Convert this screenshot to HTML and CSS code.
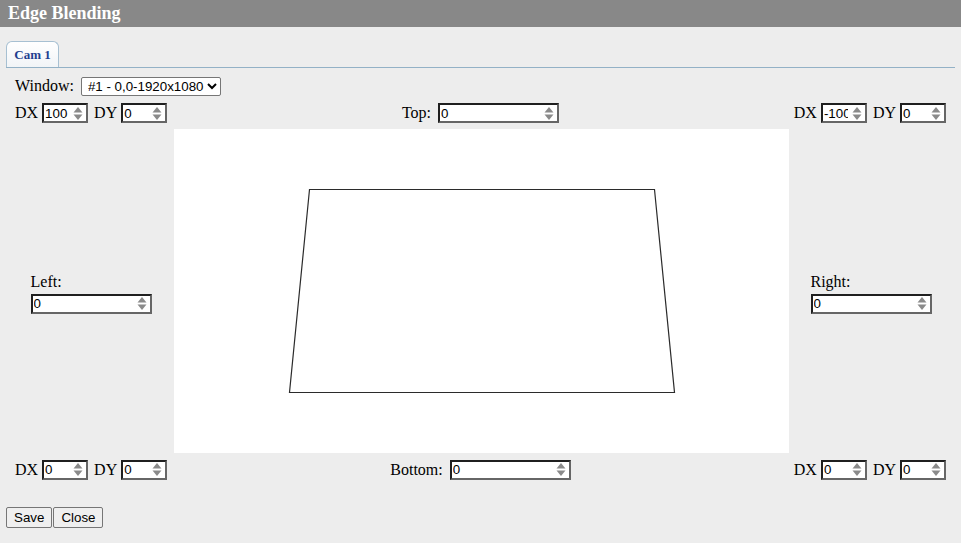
FILE: index.html
```html
<!DOCTYPE html>
<html lang="en">
<head>
    <meta charset="UTF-8">
    <title>Edge Blending</title>
    <link rel="stylesheet" href="styles.css">
</head>
<body>
    <div class="titlebar">Edge Blending</div>

    <div class="tabs">
        <div class="tab">Cam 1</div>
    </div>

    <div class="window-row">
        <span class="label">Window:</span>
        <select id="window">
            <option>#1 - 0,0-1920x1080</option>
        </select>
    </div>

    <div class="edge-row">
        <div class="corner">
            <span class="label">DX</span>
            <span class="num small"><input type="number" id="tlx" value="100"><svg class="spin" viewBox="0 0 12 15"><polygon points="1.5,6.5 6,1 10.5,6.5"/><polygon points="1.5,8.5 10.5,8.5 6,14"/></svg></span>
            <span class="label gap">DY</span>
            <span class="num small"><input type="number" id="tly" value="0"><svg class="spin" viewBox="0 0 12 15"><polygon points="1.5,6.5 6,1 10.5,6.5"/><polygon points="1.5,8.5 10.5,8.5 6,14"/></svg></span>
        </div>
        <div class="edge">
            <span class="label">Top:</span>
            <span class="num wide"><input type="number" id="top" value="0"><svg class="spin" viewBox="0 0 12 15"><polygon points="1.5,6.5 6,1 10.5,6.5"/><polygon points="1.5,8.5 10.5,8.5 6,14"/></svg></span>
        </div>
        <div class="corner right">
            <span class="label">DX</span>
            <span class="num small"><input type="number" id="trx" value="-100"><svg class="spin" viewBox="0 0 12 15"><polygon points="1.5,6.5 6,1 10.5,6.5"/><polygon points="1.5,8.5 10.5,8.5 6,14"/></svg></span>
            <span class="label gap">DY</span>
            <span class="num small"><input type="number" id="try" value="0"><svg class="spin" viewBox="0 0 12 15"><polygon points="1.5,6.5 6,1 10.5,6.5"/><polygon points="1.5,8.5 10.5,8.5 6,14"/></svg></span>
        </div>
    </div>

    <div class="stage">
        <div class="side">
            <div class="side-label">Left:</div>
            <span class="num wide"><input type="number" id="left" value="0"><svg class="spin" viewBox="0 0 12 15"><polygon points="1.5,6.5 6,1 10.5,6.5"/><polygon points="1.5,8.5 10.5,8.5 6,14"/></svg></span>
        </div>
        <div class="canvas">
            <svg width="615" height="324" viewBox="0 0 615 324">
                <polygon points="135.5,60.5 480.5,60.5 500.5,263.5 115.5,263.5" fill="none" stroke="#2b2b2b" stroke-width="1.2"/>
            </svg>
        </div>
        <div class="side">
            <div class="side-label">Right:</div>
            <span class="num wide"><input type="number" id="right" value="0"><svg class="spin" viewBox="0 0 12 15"><polygon points="1.5,6.5 6,1 10.5,6.5"/><polygon points="1.5,8.5 10.5,8.5 6,14"/></svg></span>
        </div>
    </div>

    <div class="edge-row bottom">
        <div class="corner">
            <span class="label">DX</span>
            <span class="num small"><input type="number" id="blx" value="0"><svg class="spin" viewBox="0 0 12 15"><polygon points="1.5,6.5 6,1 10.5,6.5"/><polygon points="1.5,8.5 10.5,8.5 6,14"/></svg></span>
            <span class="label gap">DY</span>
            <span class="num small"><input type="number" id="bly" value="0"><svg class="spin" viewBox="0 0 12 15"><polygon points="1.5,6.5 6,1 10.5,6.5"/><polygon points="1.5,8.5 10.5,8.5 6,14"/></svg></span>
        </div>
        <div class="edge">
            <span class="label">Bottom:</span>
            <span class="num wide"><input type="number" id="bottom" value="0"><svg class="spin" viewBox="0 0 12 15"><polygon points="1.5,6.5 6,1 10.5,6.5"/><polygon points="1.5,8.5 10.5,8.5 6,14"/></svg></span>
        </div>
        <div class="corner right">
            <span class="label">DX</span>
            <span class="num small"><input type="number" id="brx" value="0"><svg class="spin" viewBox="0 0 12 15"><polygon points="1.5,6.5 6,1 10.5,6.5"/><polygon points="1.5,8.5 10.5,8.5 6,14"/></svg></span>
            <span class="label gap">DY</span>
            <span class="num small"><input type="number" id="bry" value="0"><svg class="spin" viewBox="0 0 12 15"><polygon points="1.5,6.5 6,1 10.5,6.5"/><polygon points="1.5,8.5 10.5,8.5 6,14"/></svg></span>
        </div>
    </div>

    <div class="actions">
        <button>Save</button><button>Close</button>
    </div>
</body>
</html>
```

FILE: styles.css
```css
body {
    margin: 0;
    background-color: #ededed;
    font-family: "Liberation Serif", "Times New Roman", serif;
    font-size: 16px;
    color: #000;
}
.titlebar {
    height: 27px;
    line-height: 27px;
    padding-left: 8px;
    background-color: #888888;
    color: #fff;
    font-weight: bold;
    font-size: 18px;
}
.tabs {
    margin: 14px 6px 0 6px;
    border-bottom: 1px solid #93b1c6;
    display: flex;
}
.tab {
    width: 51px;
    height: 25px;
    line-height: 25px;
    text-align: center;
    border: 1px solid #a7c0d2;
    border-bottom: none;
    border-radius: 6px 6px 0 0;
    background: linear-gradient(#ffffff, #f1f4f7);
    color: #1f3f8f;
    font-weight: bold;
    font-size: 13px;
}
.window-row {
    display: flex;
    align-items: center;
    height: 20px;
    margin-top: 8px;
    padding-left: 15px;
}
.window-row .label {
    margin-right: 7px;
}
select {
    height: 19px;
    font-family: Arial, "Liberation Sans", sans-serif;
    font-size: 13.33px;
    border: 1px solid #767676;
    border-radius: 2px;
    background: #fff;
    padding: 0 0 0 2px;
}
.edge-row {
    display: grid;
    grid-template-columns: 1fr auto 1fr;
    align-items: center;
    height: 20px;
    margin-top: 7px;
    padding: 0 15px;
}
.edge-row.bottom {
    margin-top: 6px;
    height: 21px;
}
.corner, .edge {
    display: flex;
    align-items: center;
}
.corner.right {
    justify-content: flex-end;
}
.corner .label {
    margin-right: 4px;
}
.corner .gap {
    margin-left: 6px;
}
.edge .label {
    margin-right: 7px;
}
.num {
    display: inline-flex;
    align-items: center;
    height: 20px;
    box-sizing: border-box;
    border-style: solid;
    border-width: 2px;
    border-color: #1f1f1f #666 #666 #1f1f1f;
    background: #fff;
}
.num.small {
    width: 46px;
}
.num.wide {
    width: 121px;
}
.num input {
    flex: 1;
    min-width: 0;
    border: none;
    outline: none;
    padding: 0 0 0 1px;
    margin: 0;
    height: 16px;
    font-family: Arial, "Liberation Sans", sans-serif;
    font-size: 13.33px;
    color: #000;
    background: transparent;
    -moz-appearance: textfield;
}
.num input::-webkit-inner-spin-button,
.num input::-webkit-outer-spin-button {
    -webkit-appearance: none;
    margin: 0;
}
.spin {
    width: 12px;
    height: 15px;
    margin: 0 2px 0 3px;
    flex: none;
    fill: #8a8a8a;
}
.stage {
    display: grid;
    grid-template-columns: 166px 615px 1fr;
    height: 324px;
    margin-top: 6px;
    padding: 0 8px;
}
.side {
    display: flex;
    flex-direction: column;
    justify-content: center;
    align-items: center;
    padding-top: 3px;
}
.side-label {
    width: 121px;
    line-height: 20px;
    margin-bottom: 2px;
}
.canvas {
    background: #fff;
}
.canvas svg {
    display: block;
}
.actions {
    margin-top: 27px;
    padding-left: 6px;
    display: flex;
}
button {
    height: 21px;
    padding: 1px 7px;
    margin: 0 1px 0 0;
    font-family: Arial, "Liberation Sans", sans-serif;
    font-size: 13.33px;
    border: 1px solid #767676;
    border-radius: 2px;
    background-color: #efefef;
    color: #000;
}
```
